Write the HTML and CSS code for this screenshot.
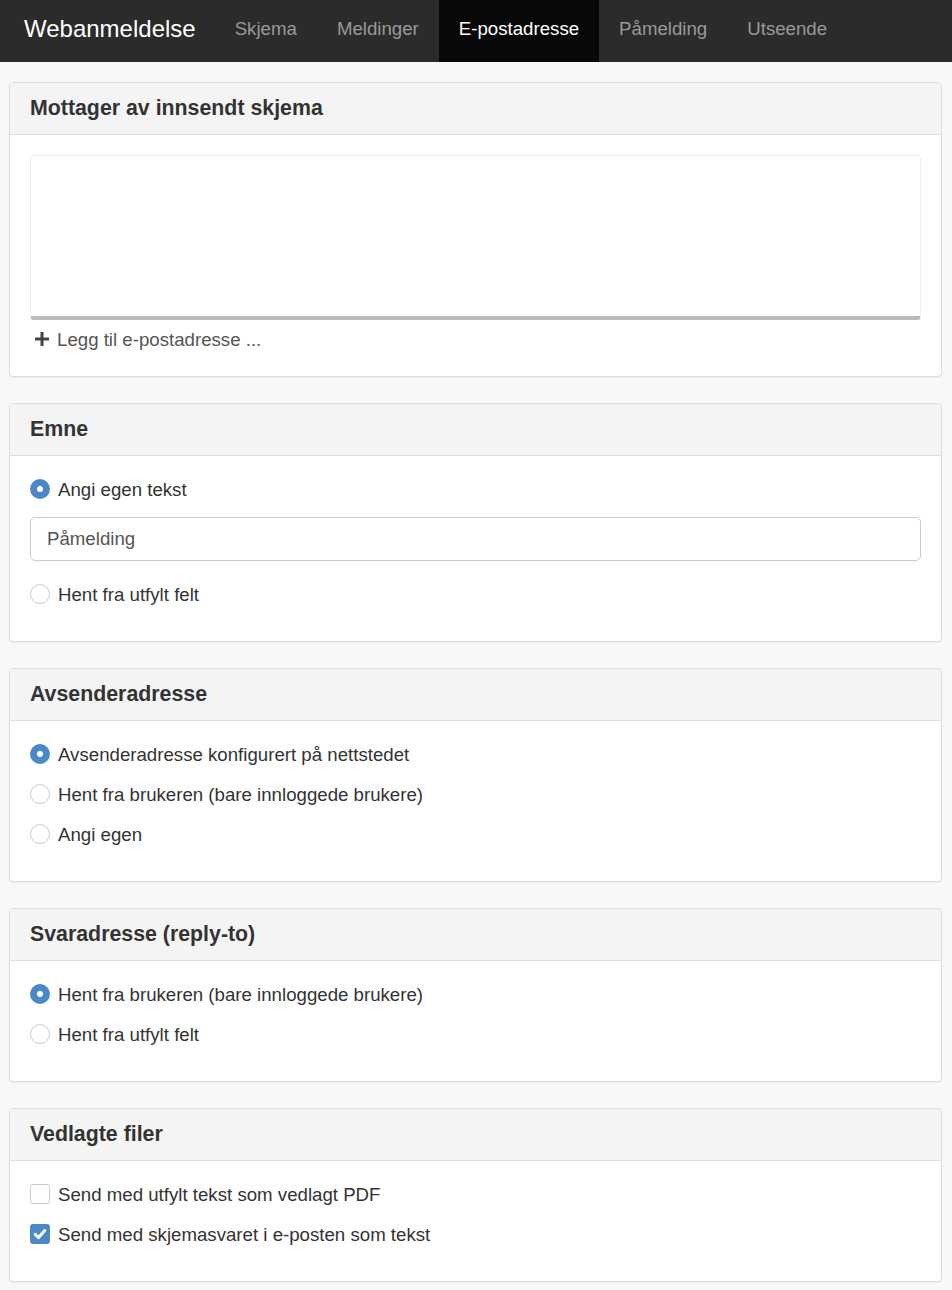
FILE: index.html
```html
<!DOCTYPE html>
<html lang="no">
<head>
<meta charset="utf-8">
<title>Webanmeldelse</title>
<link rel="stylesheet" href="styles.css">
</head>
<body>
<nav class="navbar">
  <span class="brand">Webanmeldelse</span>
  <a class="nav-item">Skjema</a>
  <a class="nav-item">Meldinger</a>
  <a class="nav-item active">E-postadresse</a>
  <a class="nav-item">Påmelding</a>
  <a class="nav-item">Utseende</a>
</nav>
<main class="content">
  <section class="panel">
    <h2 class="panel-heading">Mottager av innsendt skjema</h2>
    <div class="panel-body first">
      <div class="recipients"></div>
      <a class="add-link"><svg class="plus" width="14" height="14" viewBox="0 0 14 14"><rect x="5.5" y="0" width="3" height="14" fill="#444"/><rect x="0" y="5.5" width="14" height="3" fill="#444"/></svg>Legg til e-postadresse ...</a>
    </div>
  </section>

  <section class="panel">
    <h2 class="panel-heading">Emne</h2>
    <div class="panel-body">
      <label class="option"><span class="radio checked"></span>Angi egen tekst</label>
      <div class="text-input">Påmelding</div>
      <label class="option"><span class="radio"></span>Hent fra utfylt felt</label>
    </div>
  </section>

  <section class="panel">
    <h2 class="panel-heading">Avsenderadresse</h2>
    <div class="panel-body">
      <label class="option"><span class="radio checked"></span>Avsenderadresse konfigurert på nettstedet</label>
      <label class="option"><span class="radio"></span>Hent fra brukeren (bare innloggede brukere)</label>
      <label class="option"><span class="radio"></span>Angi egen</label>
    </div>
  </section>

  <section class="panel">
    <h2 class="panel-heading">Svaradresse (reply-to)</h2>
    <div class="panel-body">
      <label class="option"><span class="radio checked"></span>Hent fra brukeren (bare innloggede brukere)</label>
      <label class="option"><span class="radio"></span>Hent fra utfylt felt</label>
    </div>
  </section>

  <section class="panel">
    <h2 class="panel-heading">Vedlagte filer</h2>
    <div class="panel-body">
      <label class="option"><span class="checkbox"></span>Send med utfylt tekst som vedlagt PDF</label>
      <label class="option"><span class="checkbox checked"><svg width="20" height="20" viewBox="0 0 20 20"><path d="M5.2 10.4 L8.6 13.6 L14.8 6.6" fill="none" stroke="#fff" stroke-width="3" stroke-linecap="round" stroke-linejoin="round"/></svg></span>Send med skjemasvaret i e-posten som tekst</label>
    </div>
  </section>
</main>
</body>
</html>
```

FILE: styles.css
```css
html, body {
  margin: 0;
  padding: 0;
}
body {
  background: #f8f8f8;
  font-family: "Liberation Sans", Arial, sans-serif;
  font-size: 18.67px;
  color: #333;
}
.navbar {
  display: flex;
  align-items: stretch;
  height: 62px;
  background: #2b2b2b;
}
.brand {
  display: flex;
  align-items: center;
  padding: 0 19px 4px 24px;
  font-size: 24px;
  color: #fff;
}
.nav-item {
  display: flex;
  align-items: center;
  padding: 0 20px 4px;
  color: #999;
  font-size: 18.67px;
  text-decoration: none;
}
.nav-item.active {
  background: #080808;
  color: #fff;
}
.content {
  padding: 20px 10px 10px 9px;
}
.panel {
  background: #fff;
  border: 1px solid #ddd;
  border-radius: 4px;
  box-shadow: 0 1px 1px rgba(0,0,0,0.05);
  margin-bottom: 26px;
  overflow: hidden;
}
.panel-heading {
  margin: 0;
  padding: 13px 20px 13px;
  background: #f4f4f4;
  border-bottom: 1px solid #ddd;
  font-size: 21.33px;
  line-height: 25px;
  font-weight: bold;
}
.panel-body {
  padding: 21px 20px 19px;
}
.panel-body.first {
  padding: 20px 20px 19px;
}
.recipients {
  height: 160px;
  border: 1px solid #eee;
  border-bottom: 4px solid #bbb;
  border-radius: 4px;
  background: #fff;
  margin-bottom: 7px;
}
.add-link {
  display: flex;
  align-items: center;
  gap: 8px;
  padding-left: 5px;
  line-height: 26px;
  color: #555;
  margin-bottom: 4px;
}
.plus {
  display: block;
  margin-top: -2px;
}
.option {
  display: flex;
  align-items: center;
  gap: 8px;
  line-height: 26px;
  margin-bottom: 14px;
}
.radio {
  box-sizing: border-box;
  width: 20px;
  height: 20px;
  border-radius: 50%;
  border: 1px solid #ccc;
  background: #fff;
  flex: none;
  margin-top: -2px;
}
.radio.checked {
  border: 7px solid #4a88c7;
  background: #fff;
}
.checkbox {
  box-sizing: border-box;
  width: 20px;
  height: 20px;
  border-radius: 3px;
  border: 1px solid #ccc;
  background: #fff;
  flex: none;
  margin-top: -2px;
}
.checkbox.checked {
  border: none;
  background: #4a88c7;
}
.checkbox svg {
  display: block;
}
.text-input {
  box-sizing: border-box;
  height: 44px;
  border: 1px solid #ccc;
  border-radius: 5px;
  padding: 0 16px;
  display: flex;
  align-items: center;
  color: #555;
  margin-bottom: 21px;
}
```
